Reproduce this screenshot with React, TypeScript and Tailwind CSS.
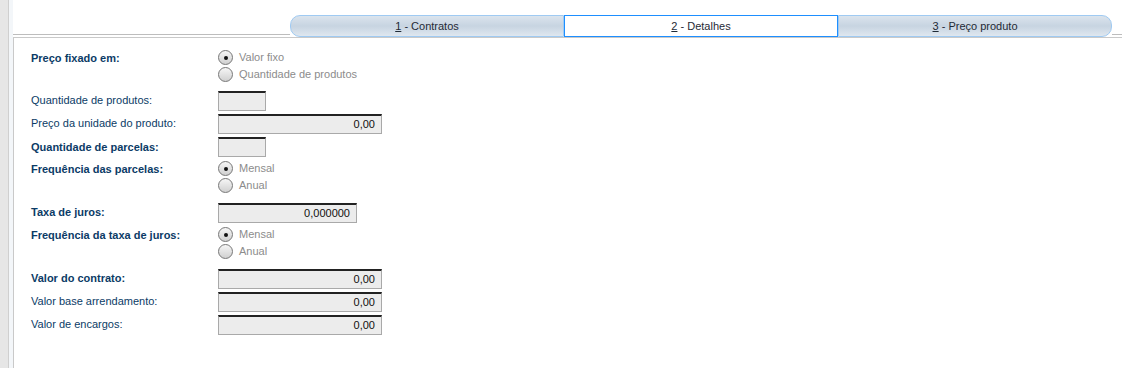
import React from 'react'

const font = { fontFamily: '"Liberation Sans", Arial, sans-serif' }

function Radio({ checked, label }: { checked?: boolean; label: string }) {
  return (
    <div className="flex h-[17px] items-center gap-[6px]">
      <span className="flex h-[15px] w-[15px] items-center justify-center rounded-full border border-[#777] bg-gradient-to-b from-[#f6f6f6] to-[#d0d0d0]">
        {checked ? <span className="h-[4px] w-[4px] rounded-full bg-[#111]" /> : null}
      </span>
      <span className="text-[11px] text-[#8c8c8c]">{label}</span>
    </div>
  )
}

function Field({ value, w }: { value?: string; w: string }) {
  return (
    <div
      className={`flex h-[20px] items-center justify-end border border-t-2 border-[#a9a9a9] border-t-[#222] bg-[#ececec] pr-[6px] text-[11px] text-[#111] ${w}`}
    >
      {value}
    </div>
  )
}

function Row({
  label,
  bold,
  children,
  h,
  top,
}: {
  label: string
  bold?: boolean
  children: React.ReactNode
  h: string
  top?: string
}) {
  return (
    <div className={`flex ${top ? `items-start ${top}` : 'items-center'} ${h}`}>
      <div
        className={`w-[187px] shrink-0 text-[11px] text-[#0b3b66] ${bold ? 'font-bold' : ''} ${top ? 'pt-[1px]' : ''}`}
      >
        {label}
      </div>
      <div>{children}</div>
    </div>
  )
}

const tabs = [
  { n: '1', t: ' - Contratos' },
  { n: '2', t: ' - Detalhes', active: true },
  { n: '3', t: ' - Preço produto' },
]

export default function App() {
  return (
    <div className="flex h-[368px] w-[1122px] overflow-hidden bg-white" style={font}>
      <div className="w-[9px] shrink-0 border-r border-[#cfcfcf] bg-[#e6e6e6]" />
      <div className="w-[4px] shrink-0 bg-[#f3f6f9]" />
      <div className="flex min-w-0 flex-1 flex-col">
        <div className="flex h-[37px] items-end">
          <div className="mb-[2px] h-px w-[277px] bg-[#bdbdbd]" />
          <div className="flex h-[22px]">
            {tabs.map((tab, i) => (
              <div
                key={tab.n}
                className={`flex w-[274px] items-center justify-center text-[11px] text-[#1f2a36] ${
                  tab.active
                    ? 'border border-[#1e8fff] bg-white'
                    : 'border border-[#9fcaf2] bg-gradient-to-b from-[#dbe4ed] via-[#c7d4e1] to-[#dfe7ef]'
                } ${i === 0 ? 'rounded-l-[10px]' : ''} ${i === 2 ? 'rounded-r-[10px]' : ''}`}
              >
                <span className="underline">{tab.n}</span>
                <span className="whitespace-pre">{tab.t}</span>
              </div>
            ))}
          </div>
          <div className="mb-[2px] h-px flex-1 bg-[#bdbdbd]" />
        </div>
        <div className="flex-1 border-l border-t border-[#c9c9c9] pl-[17px] pt-[11px]">
          <Row label="Preço fixado em:" bold h="h-[40px]" top="pt-0">
            <Radio checked label="Valor fixo" />
            <Radio label="Quantidade de produtos" />
          </Row>
          <Row label="Quantidade de produtos:" h="h-[23px]">
            <Field w="w-[48px]" />
          </Row>
          <Row label="Preço da unidade do produto:" h="h-[23px]">
            <Field w="w-[164px]" value="0,00" />
          </Row>
          <Row label="Quantidade de parcelas:" bold h="h-[24px]">
            <Field w="w-[48px]" />
          </Row>
          <Row label="Frequência das parcelas:" bold h="h-[42px]" top="pt-[1px]">
            <Radio checked label="Mensal" />
            <Radio label="Anual" />
          </Row>
          <Row label="Taxa de juros:" bold h="h-[23px]">
            <Field w="w-[139px]" value="0,000000" />
          </Row>
          <Row label="Frequência da taxa de juros:" bold h="h-[43px]" top="pt-[2px]">
            <Radio checked label="Mensal" />
            <Radio label="Anual" />
          </Row>
          <Row label="Valor do contrato:" bold h="h-[23px]">
            <Field w="w-[164px]" value="0,00" />
          </Row>
          <Row label="Valor base arrendamento:" h="h-[23px]">
            <Field w="w-[164px]" value="0,00" />
          </Row>
          <Row label="Valor de encargos:" h="h-[23px]">
            <Field w="w-[164px]" value="0,00" />
          </Row>
        </div>
      </div>
    </div>
  )
}
